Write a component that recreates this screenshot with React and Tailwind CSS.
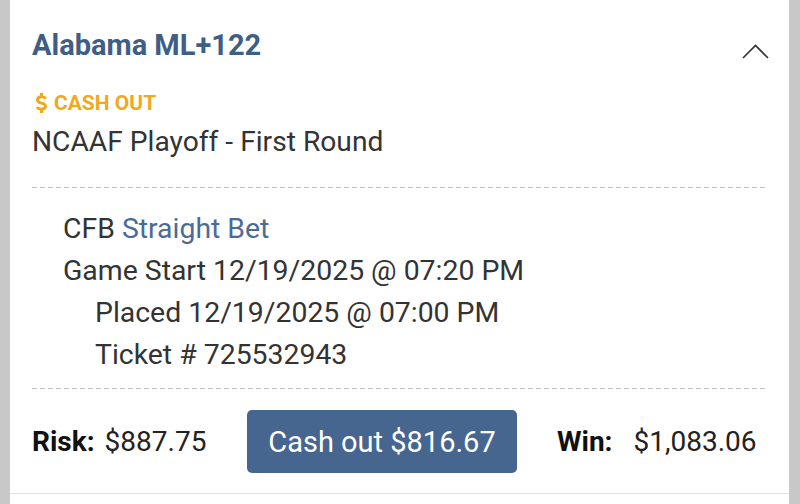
import React from 'react'

const Dashed = ({ className = '' }) => (
  <div
    className={`h-px w-full bg-[repeating-linear-gradient(to_right,#c2c2c2_0_5px,transparent_5px_8px)] ${className}`}
  />
)

export default function App() {
  return (
    <div className="w-[800px] h-[504px] bg-[#c8c8c8] pl-[10px] pr-[11px] font-['Roboto',sans-serif] overflow-hidden">
      <div className="bg-white h-full flex flex-col">
        <div className="h-[494px] border-b border-[#e2e2e2] px-[22px] pr-[21px] pt-[28px]">
          {/* Header */}
          <div className="flex items-start justify-between">
            <h1 className="text-[29px] leading-[34px] font-bold text-[#3e5e86]">Alabama ML+122</h1>
            <svg width="27" height="15" viewBox="0 0 27 15" className="mt-[16px] -mr-px">
              <path d="M1 14 L13.5 1.5 L26 14" fill="none" stroke="#333" strokeWidth="1.6" />
            </svg>
          </div>
          <div className="mt-[29px] flex items-center text-[21px] leading-[24px] font-bold text-[#f0a81c]">
            <svg width="11" height="20" viewBox="0 0 11 20" className="ml-[4px] mr-[7px]">
              <path
                d="M5.5 0v3.5M5.5 16.5V20M9.8 5.8C9 4.4 7.5 3.8 5.5 3.8 3 3.8 1.5 5 1.5 6.9c0 4.3 8 2.2 8 6.2 0 1.9-1.6 3.1-4 3.1-2.2 0-3.7-.7-4.5-2.2"
                fill="none"
                stroke="#f0a81c"
                strokeWidth="3"
              />
            </svg>
            CASH OUT
          </div>
          <div className="mt-[10px] text-[28.2px] leading-[34px] text-[#333]">NCAAF Playoff - First Round</div>
          <Dashed className="mt-[28px]" />

          {/* Details */}
          <div className="pl-[31px] pt-[20px] text-[28.4px] leading-[42px] text-[#333]">
            <div>
              CFB <span className="text-[#4a6b94]">Straight Bet</span>
            </div>
            <div>Game Start 12/19/2025 @ 07:20 PM</div>
            <div className="pl-[32px]">Placed 12/19/2025 @ 07:00 PM</div>
            <div className="pl-[32px]">Ticket # 725532943</div>
          </div>
          <Dashed className="mt-[12px]" />

          {/* Footer */}
          <div className="flex items-center mt-[21px] text-[28px] leading-[34px] text-[#111]">
            <div className="flex items-baseline w-[215px]">
              <span className="font-bold">Risk:</span>
              <span className="ml-[10px] text-[#222]">$887.75</span>
            </div>
            <button className="w-[270px] h-[63px] rounded-[5px] bg-[#46658f] text-white text-[29px]">
              Cash out $816.67
            </button>
            <div className="flex items-baseline ml-[40px]">
              <span className="font-bold">Win:</span>
              <span className="ml-[21px] text-[#222]">$1,083.06</span>
            </div>
          </div>
        </div>
      </div>
    </div>
  )
}
